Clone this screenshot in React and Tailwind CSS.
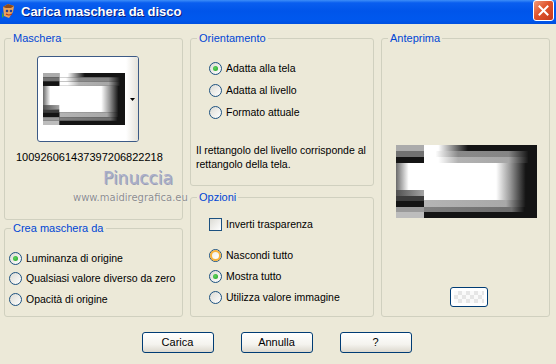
import React from 'react';

function Radio({ checked, hover }) {
  return (
    <span className="w-[13px] h-[13px] shrink-0 rounded-full border border-[#1C5180] bg-[linear-gradient(135deg,#DCDBD4,#FFFFFF)] flex items-center justify-center">
      {hover && !checked && (
        <span className="w-[11px] h-[11px] rounded-full border-2 border-[#F7B23B] bg-[linear-gradient(135deg,#F0EEE6,#FFFFFF)]" />
      )}
      {checked && (
        <span className="w-[5px] h-[5px] rounded-full bg-[radial-gradient(circle_at_40%_40%,#5FD35F,#21A121)]" />
      )}
    </span>
  );
}

function Option({ label, checked, hover, className = '' }) {
  return (
    <div className={`flex items-center gap-[4px] whitespace-nowrap ${className}`}>
      <Radio checked={checked} hover={hover} />
      <span>{label}</span>
    </div>
  );
}

function Group({ title, className = '', children }) {
  return (
    <fieldset className={`border border-[#D0D0BF] rounded-[3px] min-w-0 ${className}`}>
      <legend className="ml-[6px] px-[2px] text-[#0046D5] text-[11px] leading-[13px]">{title}</legend>
      {children}
    </fieldset>
  );
}

function XpButton({ children, className = '' }) {
  return (
    <button className={`h-[21px] border border-[#003C74] rounded-[3px] bg-[linear-gradient(to_bottom,#FFFFFF,#F4F3EE_60%,#DCD8CE)] text-black text-[11px] leading-[13px] ${className}`}>
      {children}
    </button>
  );
}

// soft rectangle mask, drawn as bands with gradients
function MaskArt({ className }) {
  return (
    <svg viewBox="0 0 141 73" preserveAspectRatio="none" className={className}>
      <defs>
        <linearGradient id="mTop" gradientUnits="userSpaceOnUse" x1="0" x2="141" y1="0" y2="0">
          <stop offset="0.3" stopColor="#ffffff" />
          <stop offset="0.51" stopColor="#141414" />
        </linearGradient>
        <linearGradient id="mBand1" gradientUnits="userSpaceOnUse" x1="0" x2="141" y1="0" y2="0">
          <stop offset="0.28" stopColor="#ffffff" />
          <stop offset="0.44" stopColor="#8a8a8a" />
          <stop offset="0.8" stopColor="#858585" />
          <stop offset="0.94" stopColor="#141414" />
        </linearGradient>
        <linearGradient id="mBand2" gradientUnits="userSpaceOnUse" x1="0" x2="141" y1="0" y2="0">
          <stop offset="0.3" stopColor="#ffffff" />
          <stop offset="0.44" stopColor="#b2b2b2" />
          <stop offset="0.8" stopColor="#a6a6a6" />
          <stop offset="0.94" stopColor="#141414" />
        </linearGradient>
        <linearGradient id="mCenter" gradientUnits="userSpaceOnUse" x1="0" x2="141" y1="0" y2="0">
          <stop offset="0" stopColor="#6a6a6a" />
          <stop offset="0.09" stopColor="#ffffff" />
          <stop offset="0.71" stopColor="#ffffff" />
          <stop offset="0.81" stopColor="#999999" />
          <stop offset="0.92" stopColor="#141414" />
        </linearGradient>
        <linearGradient id="mLow1" gradientUnits="userSpaceOnUse" x1="0" x2="141" y1="0" y2="0">
          <stop offset="0.2" stopColor="#b4b4b4" />
          <stop offset="0.78" stopColor="#a8a8a8" />
          <stop offset="0.92" stopColor="#141414" />
        </linearGradient>
        <linearGradient id="mLow2" gradientUnits="userSpaceOnUse" x1="0" x2="141" y1="0" y2="0">
          <stop offset="0.2" stopColor="#808080" />
          <stop offset="0.82" stopColor="#6e6e6e" />
          <stop offset="0.91" stopColor="#141414" />
        </linearGradient>
        <linearGradient id="mLeft" gradientUnits="userSpaceOnUse" x1="0" x2="28" y1="0" y2="0">
          <stop offset="0" stopColor="#505050" />
          <stop offset="1" stopColor="#a4a4a4" />
        </linearGradient>
      </defs>
      <rect width="141" height="73" fill="#141414" />
      <rect x="28" y="0" width="113" height="6" fill="url(#mTop)" />
      <rect x="28" y="6" width="113" height="6" fill="url(#mBand1)" />
      <rect x="28" y="12" width="113" height="6" fill="url(#mBand2)" />
      <rect x="0" y="18" width="141" height="37" fill="url(#mCenter)" />
      <rect x="28" y="55" width="113" height="7" fill="url(#mLow1)" />
      <rect x="28" y="62" width="113" height="5" fill="url(#mLow2)" />
      <rect x="0" y="0" width="28" height="6" fill="#ababab" />
      <rect x="0" y="6" width="28" height="6" fill="#727272" />
      <rect x="0" y="12" width="28" height="6" fill="#141414" />
      <rect x="0" y="45" width="28" height="6" fill="url(#mLeft)" />
      <rect x="0" y="51" width="28" height="5" fill="#3c3c3c" />
      <rect x="0" y="56" width="28" height="6" fill="#141414" />
      <rect x="0" y="62" width="28" height="5" fill="#9a9a9a" />
      <rect x="0" y="67" width="28" height="6" fill="#bdbdbd" />
    </svg>
  );
}

function AppIcon() {
  return (
    <svg width="16" height="17" viewBox="0 0 16 17" className="shrink-0">
      <path d="M2 4 L7 1 L13 3 L12 9 L8 15 L3 13 Z" fill="#E9A25A" />
      <path d="M2 4 L7 1 L13 3 L10 5 L5 5 Z" fill="#8A4A1E" />
      <circle cx="6" cy="8" r="1.3" fill="#2A3F8F" />
      <circle cx="10" cy="8" r="1.3" fill="#2A3F8F" />
      <path d="M5 11 Q8 13 11 11" stroke="#B0301E" strokeWidth="1.2" fill="none" />
      <path d="M1 9 L3 13 L1 15 Z" fill="#3BA34A" />
    </svg>
  );
}

export default function App() {
  return (
    <div className="relative w-[556px] h-[364px] overflow-hidden bg-[#ECE9D8] text-black text-[10.5px] leading-[13px] font-['Liberation_Sans',Arial,sans-serif]">
      {/* Title bar */}
      <div className="h-[24px] flex items-start bg-[linear-gradient(to_bottom,#3D8EF8,#0A5EEF_12%,#0055EA_45%,#0058EE_80%,#0050E0)]">
        <div className="flex items-center gap-[4px] h-[23px] pl-[1px]">
          <AppIcon />
          <span className="text-white font-bold text-[13px] [text-shadow:1px_1px_0_#0A1C7A]">Carica maschera da disco</span>
        </div>
        <div className="ml-auto mr-[2px] w-[21px] h-[21px] rounded-[3px] border border-white bg-[linear-gradient(135deg,#F09A7A,#E0542C_45%,#C4381B)] flex items-center justify-center">
          <svg width="11" height="11" viewBox="0 0 11 11">
            <path d="M1.5 1.5 L9.5 9.5 M9.5 1.5 L1.5 9.5" stroke="white" strokeWidth="2" strokeLinecap="square" />
          </svg>
        </div>
      </div>

      {/* Body */}
      <div className="grid grid-cols-[179px_184px_169px] gap-x-[7px] pl-[4px] pt-[8px]">
        <div className="flex flex-col gap-[2px]">
          <Group title="Maschera" className="h-[188px]">
            <div className="ml-[32px] mt-[11px] w-[102px] h-[86px] rounded-[3px] border border-[#3C5A86] bg-white flex">
              <div className="pl-[5px] pt-[16px]">
                <MaskArt className="w-[82px] h-[52px] block" />
              </div>
              <div className="ml-auto w-[12px] h-full bg-[linear-gradient(to_right,#FFFFFF,#E4E2DA)] flex items-center justify-center rounded-r-[2px]">
                <svg width="5" height="3" viewBox="0 0 5 3">
                  <path d="M0 0 H5 L2.5 3 Z" fill="#000" />
                </svg>
              </div>
            </div>
            <div className="ml-[11px] mt-[9px] text-[11px]">100926061437397206822218</div>
          </Group>
          <Group title="Crea maschera da" className="h-[95px]">
            <div className="mt-[13px] ml-[4px] flex flex-col">
              <Option label="Luminanza di origine" checked className="h-[20px]" />
              <Option label="Qualsiasi valore diverso da zero" className="h-[21px]" />
              <Option label="Opacità di origine" className="h-[20px]" />
            </div>
          </Group>
        </div>

        <div className="flex flex-col gap-[5px]">
          <Group title="Orientamento" className="h-[154px]">
            <div className="mt-[12px] ml-[18px] flex flex-col">
              <Option label="Adatta alla tela" checked className="h-[22px]" />
              <Option label="Adatta al livello" className="h-[22px]" />
              <Option label="Formato attuale" className="h-[22px]" />
            </div>
            <p className="mt-[20px] ml-[5px] leading-[14px] whitespace-nowrap">
              Il rettangolo del livello corrisponde al
              <br />
              rettangolo della tela.
            </p>
          </Group>
          <Group title="Opzioni" className="h-[126px]">
            <div className="mt-[10px] ml-[18px] h-[20px] flex items-center gap-[4px]">
              <span className="w-[13px] h-[13px] border border-[#1C5180] bg-[linear-gradient(135deg,#DCDBD4,#FFFFFF)]" />
              <span>Inverti trasparenza</span>
            </div>
            <div className="mt-[11px] ml-[18px] flex flex-col">
              <Option label="Nascondi tutto" hover className="h-[21px]" />
              <Option label="Mostra tutto" checked className="h-[21px]" />
              <Option label="Utilizza valore immagine" className="h-[21px]" />
            </div>
          </Group>
        </div>

        <Group title="Anteprima" className="h-[285px]">
          <MaskArt className="block ml-[14px] mt-[100px] w-[141px] h-[73px]" />
          <div className="ml-[68px] mt-[69px] w-[38px] h-[20px] rounded-[3px] border border-[#003C74] p-[3px] bg-white">
            <div className="w-full h-full bg-[repeating-conic-gradient(#E6E6E6_0%_25%,#FAFAFA_0%_50%)] bg-[length:8px_8px]" />
          </div>
        </Group>
      </div>

      {/* Buttons */}
      <div className="flex justify-center gap-[27px] mt-[15px] pr-[3px]">
        <XpButton className="w-[72px]">Carica</XpButton>
        <XpButton className="w-[72px]">Annulla</XpButton>
        <XpButton className="w-[72px]">?</XpButton>
      </div>

      {/* Watermark */}
      <div className="absolute left-[103px] top-[170px] text-[17px] leading-[17px] font-['DejaVu_Sans',sans-serif] text-[#A9AECA] [text-shadow:1px_1px_0_#9A9EB4]">
        Pinuccia
      </div>
      <div className="absolute left-[73px] top-[192px] text-[10px] leading-[12px] font-['DejaVu_Sans',sans-serif] text-[#8C8C8C] [text-shadow:0_0_1px_#FFFFFF]">
        www.maidiregrafica.eu
      </div>
    </div>
  );
}
